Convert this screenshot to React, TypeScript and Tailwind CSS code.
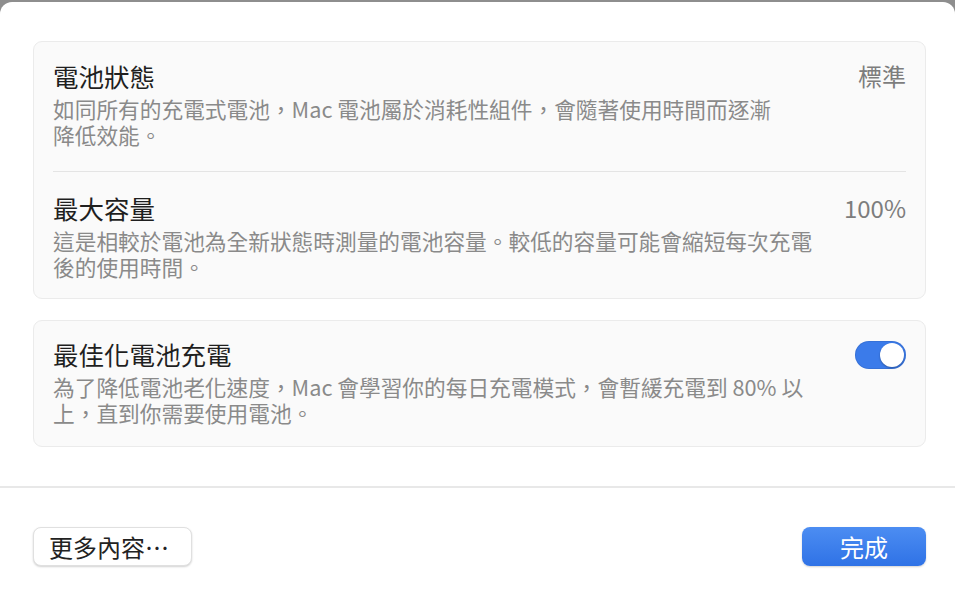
import React from "react";

const font = {
  fontFamily: '"Noto Sans CJK TC", "Noto Sans", sans-serif',
};

function Toggle() {
  return (
    <div className="flex h-[28px] w-[51px] items-center justify-end rounded-full bg-[#3b7bea] p-[2px] shadow-[inset_0_0_0_1px_rgba(0,0,0,0.08)]">
      <div className="h-[24px] w-[24px] rounded-full bg-white shadow-[0_1px_2px_rgba(0,0,0,0.3)]" />
    </div>
  );
}

export default function App() {
  return (
    <div className="h-[600px] w-[955px] overflow-hidden bg-[#8e8e8e]" style={font}>
      <div className="mt-[2px] flex h-[598px] flex-col rounded-t-[12px] bg-white">
        <div className="flex flex-col gap-[21px] pl-[33px] pr-[29px] pt-[39px]">
          <section className="rounded-[9px] border border-[#ebebeb] bg-[#fafafa] px-[19px]">
            <div className="flex justify-between pt-[18px] pb-[23px]">
              <div>
                <h2 className="text-[25.5px] leading-[32px] text-[#1f1f1f]">電池狀態</h2>
                <p className="mt-[4px] text-[21.7px] leading-[26px] text-[#8a8a8a]">
                  如同所有的充電式電池，Mac 電池屬於消耗性組件，會隨著使用時間而逐漸
                  <br />
                  降低效能。
                </p>
              </div>
              <span className="text-[24px] leading-[32px] text-[#7d7d7d]">標準</span>
            </div>
            <div className="h-px bg-[#e4e4e4]" />
            <div className="flex justify-between pt-[20px] pb-[18px]">
              <div>
                <h2 className="text-[25.5px] leading-[32px] text-[#1f1f1f]">最大容量</h2>
                <p className="mt-[4px] text-[21.7px] leading-[26px] text-[#8a8a8a]">
                  這是相較於電池為全新狀態時測量的電池容量。較低的容量可能會縮短每次充電
                  <br />
                  後的使用時間。
                </p>
              </div>
              <span className="text-[24px] leading-[32px] text-[#7d7d7d]">100%</span>
            </div>
          </section>

          <section className="flex justify-between rounded-[9px] border border-[#ebebeb] bg-[#fafafa] px-[19px] pt-[17px] pb-[20px]">
            <div>
              <h2 className="text-[25.5px] leading-[32px] text-[#1f1f1f]">最佳化電池充電</h2>
              <p className="mt-[4px] text-[21.7px] leading-[26px] text-[#8a8a8a]">
                為了降低電池老化速度，Mac 會學習你的每日充電模式，會暫緩充電到 80% 以
                <br />
                上，直到你需要使用電池。
              </p>
            </div>
            <div className="pt-[3px]">
              <Toggle />
            </div>
          </section>
        </div>

        <div className="mt-[39px] h-[2px] bg-[#e8e8e8]" />

        <div className="flex items-center justify-between pl-[33px] pr-[29px] pt-[39px]">
          <button className="flex h-[39px] w-[159px] items-center rounded-[8px] border border-[#e0e0e0] bg-white pl-[15px] text-[24px] text-[#222] shadow-[0_1px_2px_rgba(0,0,0,0.18)]">
            更多內容⋯
          </button>
          <button className="flex h-[39px] w-[124px] items-center justify-center rounded-[8px] bg-gradient-to-b from-[#4c8df2] to-[#2f72e6] text-[24px] text-white shadow-[0_1px_2px_rgba(0,0,0,0.18)]">
            完成
          </button>
        </div>
      </div>
    </div>
  );
}
